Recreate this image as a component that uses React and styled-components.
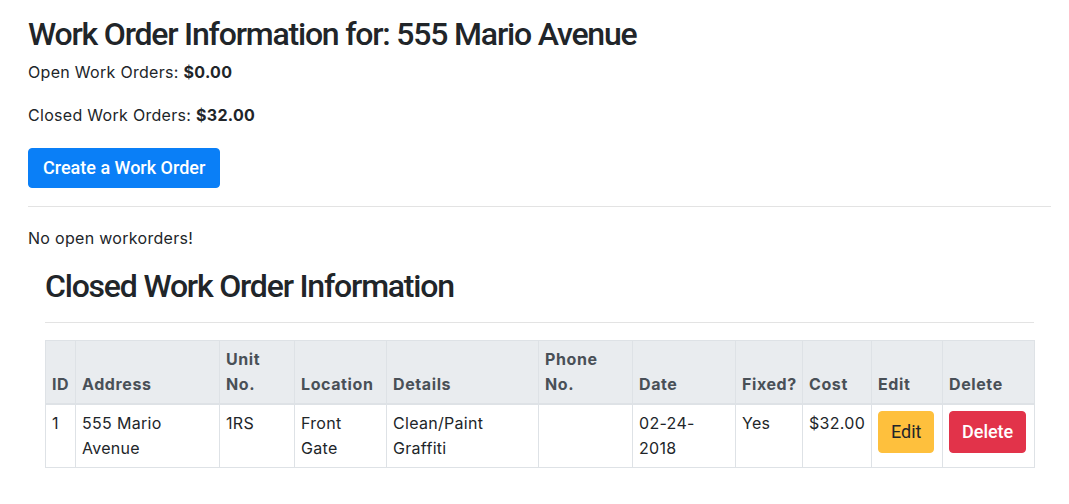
import styled, { createGlobalStyle } from "styled-components";

const GlobalStyle = createGlobalStyle`
  body {
    margin: 0;
    font-family: Inter, "Noto Sans", sans-serif;
    font-size: 16px;
    line-height: 1.5;
    letter-spacing: 0.3px;
    color: #212529;
    background: #fff;
  }
`;

const Page = styled.div`
  padding: 15px 18px 20px 28px;
`;

const Title = styled.h2`
  margin: 0 0 ${(props) => props.mb || "7px"} 0;
  font-family: Roboto, "Liberation Sans", sans-serif;
  font-size: 32px;
  font-weight: 500;
  line-height: 1.2;
  letter-spacing: -1.2px;
`;

const Text = styled.p`
  margin: 0 0 ${(props) => props.mb || "19px"} 0;
`;

const Divider = styled.hr`
  margin: ${(props) => props.m || "18px 0 19px"};
  border: 0;
  border-top: 1px solid #e3e3e3;
`;

const Button = styled.button`
  font-family: Roboto, "Liberation Sans", sans-serif;
  font-size: 18px;
  font-weight: ${(props) => props.weight || 400};
  line-height: 24px;
  letter-spacing: 0;
  padding: ${(props) => props.pad || "8px 12px"};
  border: 1px solid ${(props) => props.bg};
  background: ${(props) => props.bg};
  color: ${(props) => props.fg};
  border-radius: 4px;
  cursor: pointer;
`;

const Section = styled.div`
  padding: 0 17px;
`;

const Table = styled.table`
  width: 100%;
  border-collapse: collapse;
  table-layout: fixed;
`;

const Th = styled.th`
  text-align: left;
  vertical-align: bottom;
  padding: 6px 6px;
  line-height: 25px;
  font-weight: 700;
  letter-spacing: 0.6px;
  color: #495057;
  background: #e9ecef;
  border: 1px solid #dee2e6;
  border-bottom-width: 2px;
`;

const Td = styled.td`
  vertical-align: top;
  padding: 6px 6px;
  line-height: 25px;
  border: 1px solid #dee2e6;
`;

const columns = [
  { w: 30, label: ["ID"] },
  { w: 144, label: ["Address"] },
  { w: 75, label: ["Unit", "No."] },
  { w: 92, label: ["Location"] },
  { w: 152, label: ["Details"] },
  { w: 94, label: ["Phone", "No."] },
  { w: 103, label: ["Date"] },
  { w: 67, label: ["Fixed?"] },
  { w: 69, label: ["Cost"] },
  { w: 71, label: ["Edit"] },
  { w: 92, label: ["Delete"] },
];

const row = [
  ["1"],
  ["555 Mario", "Avenue"],
  ["1RS"],
  ["Front", "Gate"],
  ["Clean/Paint", "Graffiti"],
  [],
  ["02-24-", "2018"],
  ["Yes"],
  ["$32.00"],
];

const Lines = ({ lines }) =>
  lines.map((l, i) => (
    <span key={i}>
      {i > 0 && <br />}
      {l}
    </span>
  ));

export default function App() {
  return (
    <>
      <GlobalStyle />
      <Page>
        <Title>Work Order Information for: 555 Mario Avenue</Title>
        <Text>
          Open Work Orders: <b>$0.00</b>
        </Text>
        <Text mb="21px">
          Closed Work Orders: <b>$32.00</b>
        </Text>
        <Button bg="#0a7ff7" fg="#fff" pad="7px 14px" weight={500}>
          Create a Work Order
        </Button>
        <Divider />
        <Text mb="17px">No open workorders!</Text>
        <Section>
          <Title mb="0">Closed Work Order Information</Title>
          <Divider m="16px 0 17px" />
          <Table>
            <colgroup>
              {columns.map((c, i) => (
                <col key={i} style={{ width: c.w }} />
              ))}
            </colgroup>
            <thead>
              <tr>
                {columns.map((c, i) => (
                  <Th key={i}>
                    <Lines lines={c.label} />
                  </Th>
                ))}
              </tr>
            </thead>
            <tbody>
              <tr>
                {row.map((cell, i) => (
                  <Td key={i}>
                    <Lines lines={cell} />
                  </Td>
                ))}
                <Td>
                  <Button bg="#fec03d" fg="#212529">
                    Edit
                  </Button>
                </Td>
                <Td>
                  <Button bg="#e2334a" fg="#fff" weight={500}>
                    Delete
                  </Button>
                </Td>
              </tr>
            </tbody>
          </Table>
        </Section>
      </Page>
    </>
  );
}
